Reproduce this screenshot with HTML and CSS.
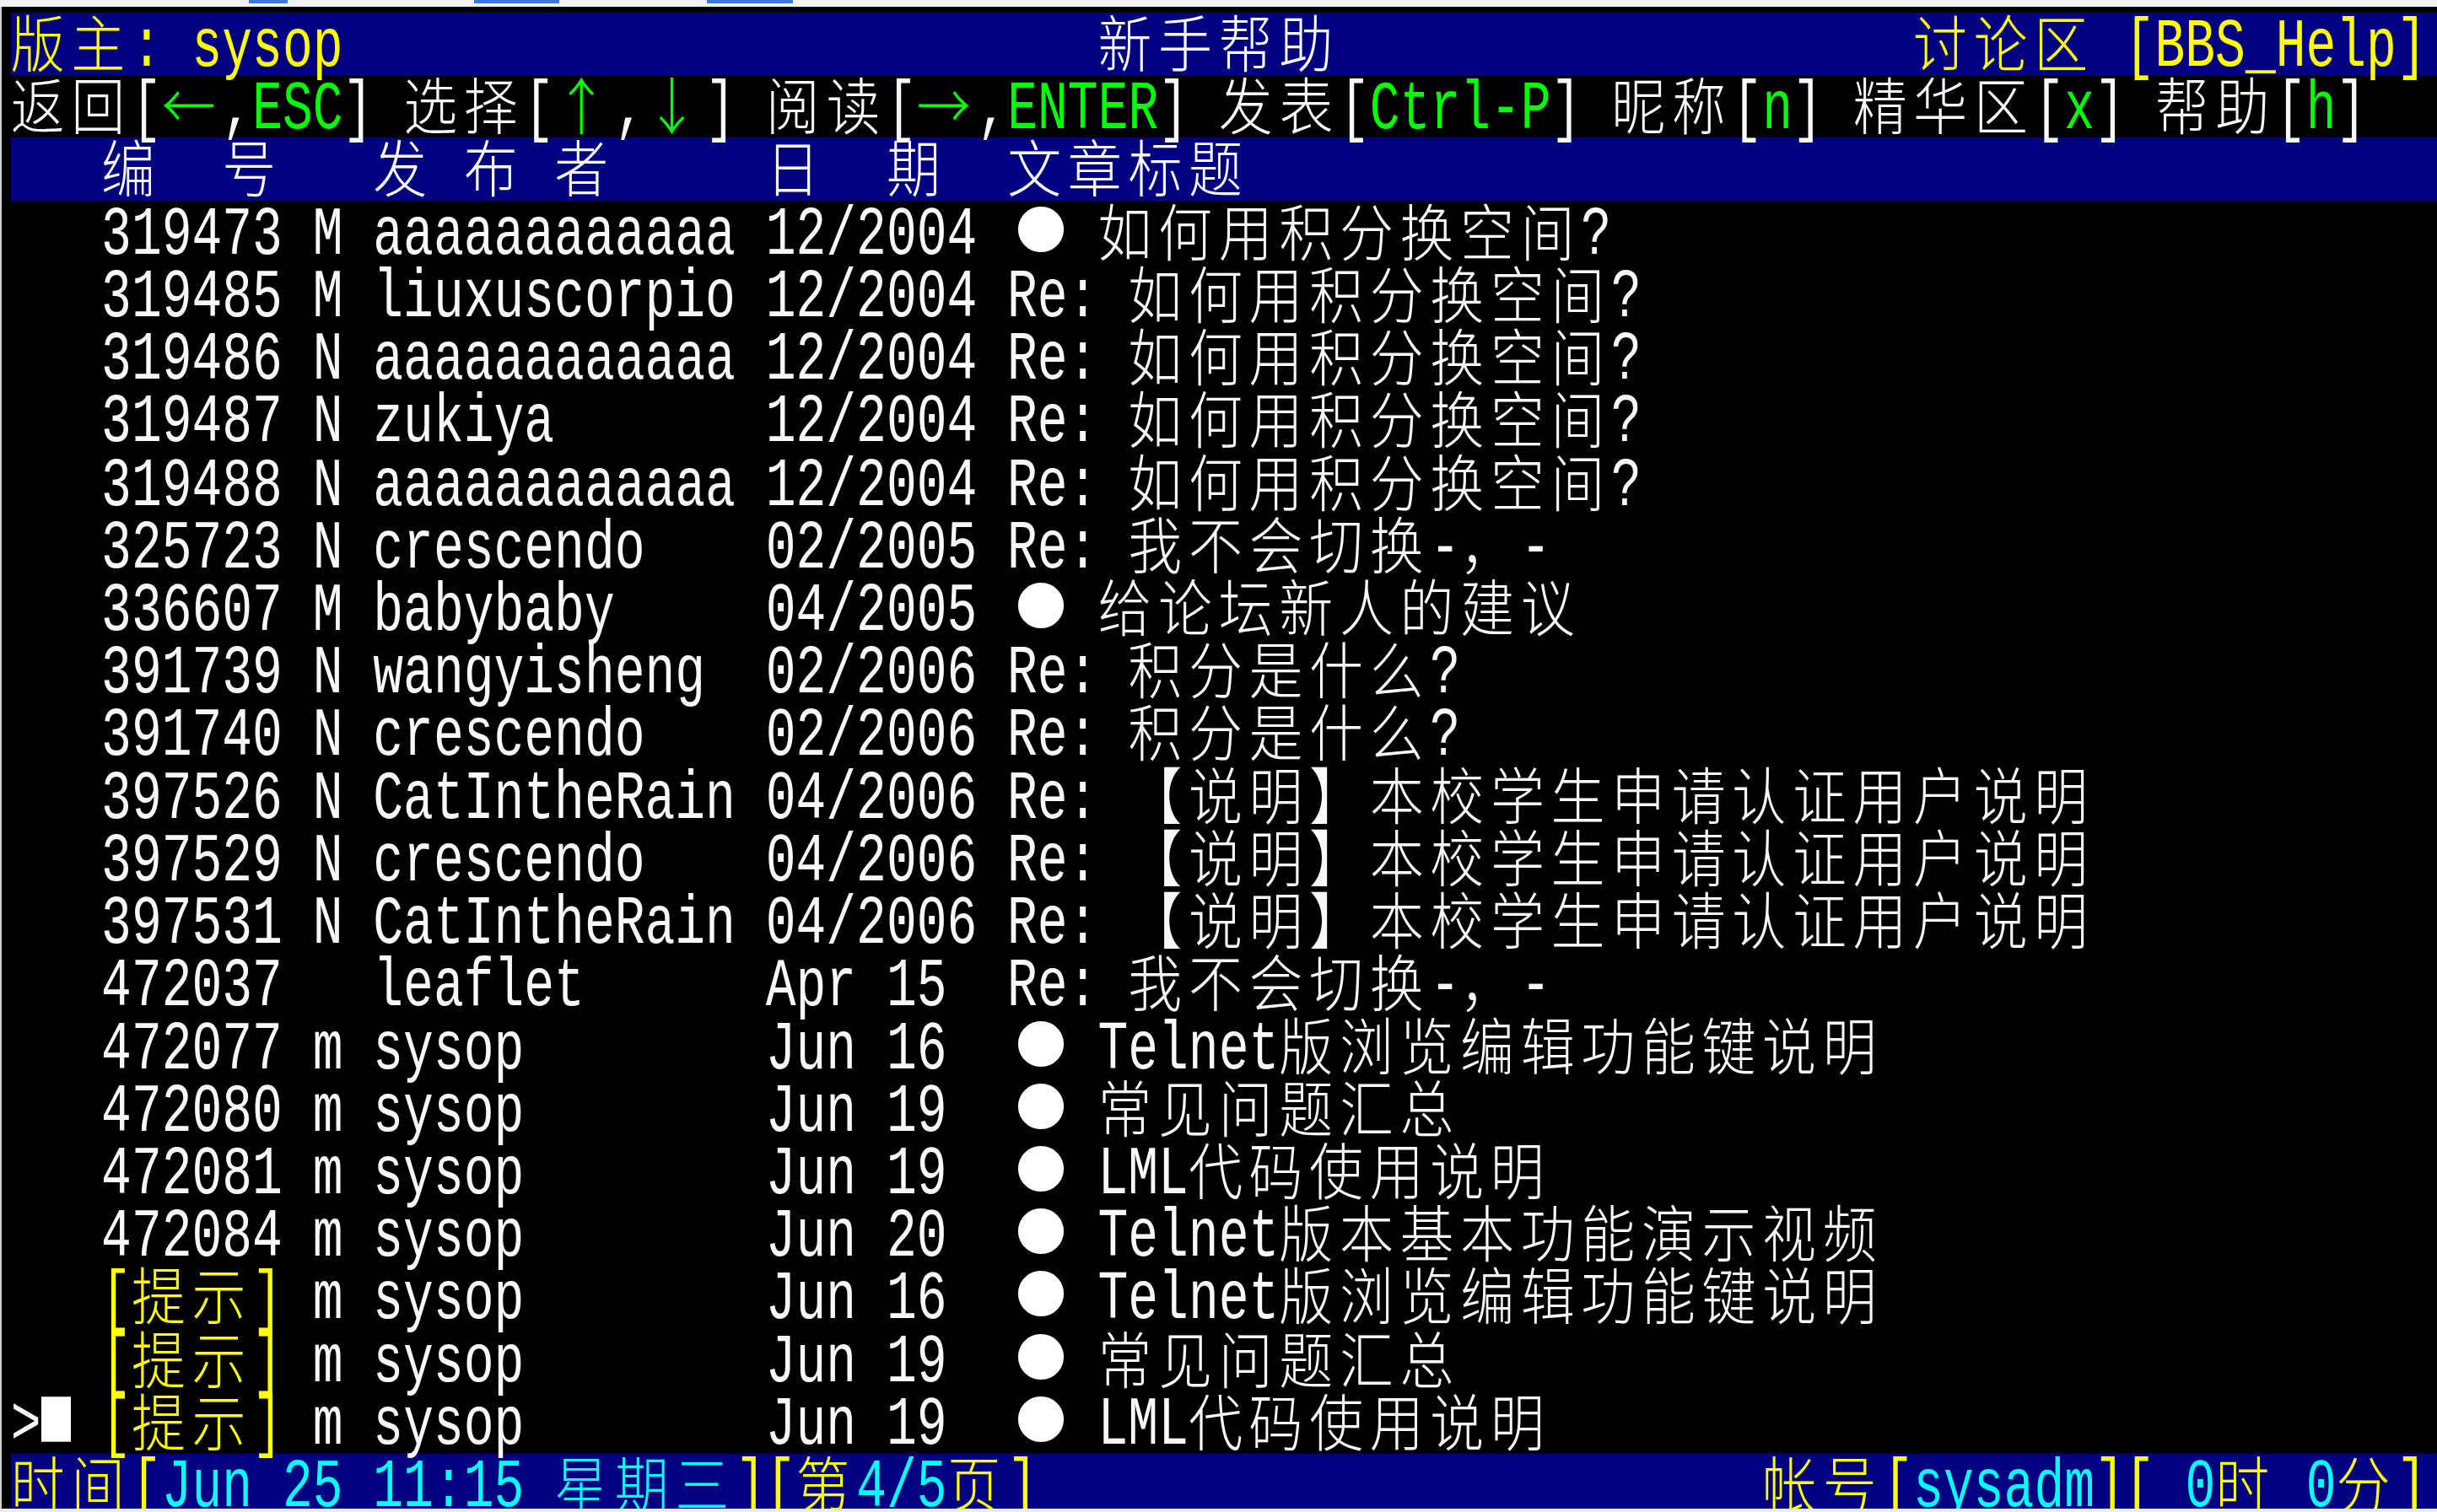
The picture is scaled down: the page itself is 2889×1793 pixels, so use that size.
FILE: index.html
```html
<!DOCTYPE html>
<html lang="zh">
<head>
    <meta charset="UTF-8">
    <title>新手帮助 - BBS_Help</title>
    <link rel="stylesheet" href="styles.css">
</head>
<body>
    <div class="tabs">
        <span class="tab tab-1"></span>
        <span class="tab tab-2"></span>
        <span class="tab tab-3"></span>
    </div>

    <div class="window">
        <div class="term">
            <!-- 标题栏 -->
            <div class="row bar"><span class="y"><span class="w">版主</span>: sysop</span>                         <span class="w">新手帮助</span>                   <span class="y"><span class="w">讨论区</span> [BBS_Help]</span></div>
            <div class="row"><span class="w">返回</span>[<span class="w g">←</span>,<span class="g">ESC</span>] <span class="w">选择</span>[<span class="w g">↑</span>,<span class="w g">↓</span>] <span class="w">阅读</span>[<span class="w g">→</span>,<span class="g">ENTER</span>] <span class="w">发表</span>[<span class="g">Ctrl-P</span>] <span class="w">昵称</span>[<span class="g">n</span>] <span class="w">精华区</span>[<span class="g">x</span>] <span class="w">帮助</span>[<span class="g">h</span>]</div>
            <div class="row bar">   <span class="w">编</span>  <span class="w">号</span>   <span class="w">发</span> <span class="w">布</span> <span class="w">者</span>     <span class="w">日</span>  <span class="w">期</span>  <span class="w">文章标题</span></div>

            <!-- 文章列表 -->
            <div class="row">   319473 M aaaaaaaaaaaa 12/2004 <span class="dot">●</span> <span class="w">如何用积分换空间</span>?</div>
            <div class="row">   319485 M liuxuscorpio 12/2004 Re: <span class="w">如何用积分换空间</span>?</div>
            <div class="row">   319486 N aaaaaaaaaaaa 12/2004 Re: <span class="w">如何用积分换空间</span>?</div>
            <div class="row">   319487 N zukiya       12/2004 Re: <span class="w">如何用积分换空间</span>?</div>
            <div class="row">   319488 N aaaaaaaaaaaa 12/2004 Re: <span class="w">如何用积分换空间</span>?</div>
            <div class="row">   325723 N crescendo    02/2005 Re: <span class="w">我不会切换</span>-<span class="w">，</span>-</div>
            <div class="row">   336607 M babybaby     04/2005 <span class="dot">●</span> <span class="w">给论坛新人的建议</span></div>
            <div class="row">   391739 N wangyisheng  02/2006 Re: <span class="w">积分是什么</span>?</div>
            <div class="row">   391740 N crescendo    02/2006 Re: <span class="w">积分是什么</span>?</div>
            <div class="row">   397526 N CatIntheRain 04/2006 Re: <span class="w">【说明】本校学生申请认证用户说明</span></div>
            <div class="row">   397529 N crescendo    04/2006 Re: <span class="w">【说明】本校学生申请认证用户说明</span></div>
            <div class="row">   397531 N CatIntheRain 04/2006 Re: <span class="w">【说明】本校学生申请认证用户说明</span></div>
            <div class="row">   472037   leaflet      Apr 15  Re: <span class="w">我不会切换</span>-<span class="w">，</span>-</div>
            <div class="row">   472077 m sysop        Jun 16  <span class="dot">●</span> Telnet<span class="w">版浏览编辑功能键说明</span></div>
            <div class="row">   472080 m sysop        Jun 19  <span class="dot">●</span> <span class="w">常见问题汇总</span></div>
            <div class="row">   472081 m sysop        Jun 19  <span class="dot">●</span> LML<span class="w">代码使用说明</span></div>
            <div class="row">   472084 m sysop        Jun 20  <span class="dot">●</span> Telnet<span class="w">版本基本功能演示视频</span></div>
            <div class="row">   <span class="y">[<span class="w">提示</span>]</span> m sysop        Jun 16  <span class="dot">●</span> Telnet<span class="w">版浏览编辑功能键说明</span></div>
            <div class="row">   <span class="y">[<span class="w">提示</span>]</span> m sysop        Jun 19  <span class="dot">●</span> <span class="w">常见问题汇总</span></div>
            <div class="row">&gt;<span class="cursor"> </span> <span class="y">[<span class="w">提示</span>]</span> m sysop        Jun 19  <span class="dot">●</span> LML<span class="w">代码使用说明</span></div>

            <!-- 状态栏 -->
            <div class="row bar"><span class="y"><span class="w">时间</span>[</span><span class="c">Jun 25 11:15 <span class="w">星期三</span></span><span class="y">][<span class="w">第</span></span><span class="c">4/5</span><span class="y"><span class="w">页</span>]</span>                        <span class="y"><span class="w">帐号</span>[</span><span class="c">sysadm</span><span class="y">][</span><span class="c"> 0</span><span class="y w">时</span><span class="c"> 0</span><span class="y"><span class="w">分</span>]</span></div>
        </div>
    </div>
</body>
</html>
```

FILE: styles.css
```css
body {
    margin: 0;
    width: 2889px;
    height: 1793px;
    overflow: hidden;
    background: #ececec;
}

/* 窗口顶部的标签条 */
.tabs {
    display: flex;
    height: 8px;
    background: #f2f2f2;
}

.tab {
    height: 4px;
    background: #3b78d8;
}

.tab-1 { margin-left: 295px; width: 46px; }
.tab-2 { margin-left: 221px; width: 101px; }
.tab-3 { margin-left: 175px; width: 102px; }

.window {
    box-sizing: border-box;
    height: 1781px;
    padding-top: 6.5px;
    background: #000;
    border-left: 2px solid #cfcfcf;
    overflow: hidden;
}

/* 终端: 80列, 每列35.8px, 每行74.3px (字形纵向拉伸) */
.term {
    margin-left: 10.7px;
    transform: scaleY(1.37);
    transform-origin: 0 0;
    font-family: "Liberation Mono", "Noto Sans CJK SC", monospace;
    font-size: 59.66px;
    color: #f8f8f8;
}

.row {
    height: 54.234px;
    line-height: 61.8px;
    white-space: pre;
}

.bar {
    background: #000080;
}

/* 双宽字符 (中文, 箭头) */
.w {
    display: inline-block;
    vertical-align: top;
    height: 54.234px;
    font-family: "Noto Sans CJK SC", sans-serif;
    font-size: 64px;
    font-weight: 300;
    line-height: 47px;
    letter-spacing: 7.6px;
    transform: scaleY(0.83);
}

.dot {
    display: inline-block;
    vertical-align: top;
    box-sizing: border-box;
    width: 71.6px;
    height: 54.234px;
    padding-left: 8px;
    font-family: "Noto Sans CJK SC", sans-serif;
    font-size: 60px;
    line-height: 41.5px;
    text-align: center;
    color: #fff;
    transform: scaleY(0.73);
}

.cursor {
    display: inline-block;
    vertical-align: top;
    width: 35.8px;
    height: 39.4px;
    margin-top: 5.1px;
    background: #fff;
}

.y { color: #ffff00; }
.g { color: #00ff00; }
.c { color: #00ffff; }
```
